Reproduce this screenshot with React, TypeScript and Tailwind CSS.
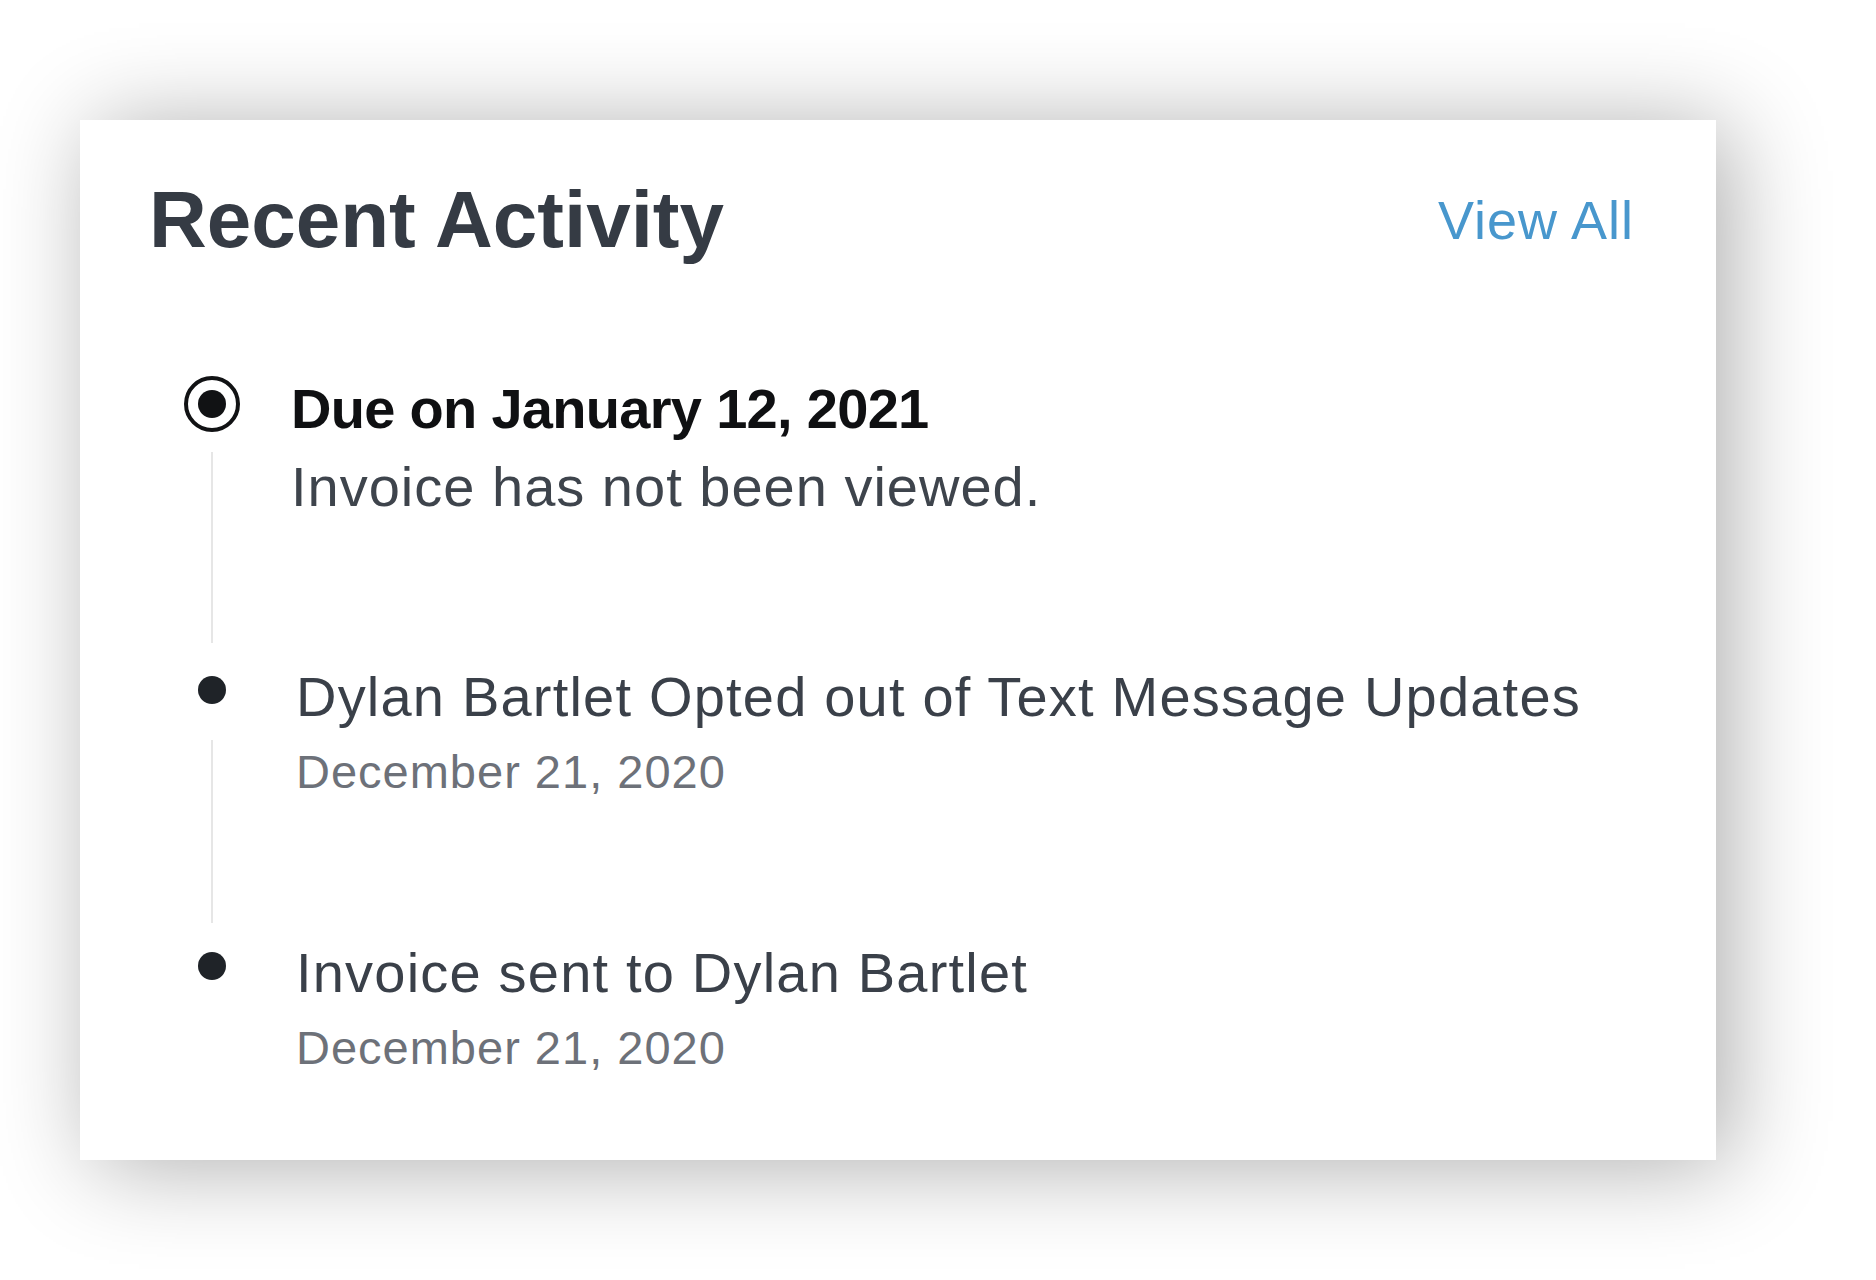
const ITEMS = [
  {
    title: "Due on January 12, 2021",
    detail: "Invoice has not been viewed.",
    current: true,
    textClass: "pl-0 pb-[138px]",
    lineClass: "mt-[20px] mb-[18px]",
  },
  {
    title: "Dylan Bartlet Opted out of Text Message Updates",
    detail: "December 21, 2020",
    current: false,
    textClass: "pl-[5px] pb-[129px]",
    lineClass: "mt-[36px] mb-[14px]",
  },
  {
    title: "Invoice sent to Dylan Bartlet",
    detail: "December 21, 2020",
    current: false,
    textClass: "pl-[5px] pb-0",
    lineClass: "",
  },
];

function Marker({ current }: { current: boolean }) {
  if (current) {
    return (
      <div className="mt-[3px] grid h-[56px] w-[56px] shrink-0 place-items-center rounded-full border-[4px] border-[#111214]">
        <div className="h-[28px] w-[28px] rounded-full bg-[#111214]" />
      </div>
    );
  }

  return <div className="mt-[15px] h-[28px] w-[28px] shrink-0 rounded-full bg-[#1f2328]" />;
}

export default function App() {
  return (
    <div
      className="h-[1280px] w-full bg-white pl-[80px] pt-[120px]"
      style={{ fontFamily: '"Liberation Sans", Arial, sans-serif' }}
    >
      <section className="h-[1040px] w-[1636px] bg-white pl-[69px] pr-[82px] pt-[56px] shadow-[14px_6px_90px_rgba(0,0,0,0.32)]">
        <header className="flex items-center justify-between">
          <h2 className="text-[80px] font-bold leading-[88px] text-[#353b44]">Recent Activity</h2>
          <a className="text-[54px] leading-[64px] tracking-[1px] text-[#4897cd]">View All</a>
        </header>

        <ol className="ml-[35px] mt-[109px]">
          {ITEMS.map((item, index) => (
            <li key={item.title} className="flex">
              <div className="flex w-[56px] shrink-0 flex-col items-center">
                <Marker current={item.current} />
                {index < ITEMS.length - 1 && (
                  <div className={`w-[2px] flex-1 bg-[#e6e6e6] ${item.lineClass}`} />
                )}
              </div>

              <div className={`ml-[51px] min-w-0 ${item.textClass}`}>
                {item.current ? (
                  <>
                    <p className="text-[56px] font-bold leading-[72px] tracking-[-0.7px] text-[#0f1012]">
                      {item.title}
                    </p>
                    <p className="mt-[6px] text-[56px] leading-[72px] tracking-[1px] text-[#3e444c]">
                      {item.detail}
                    </p>
                  </>
                ) : (
                  <>
                    <p className="text-[56px] leading-[72px] tracking-[1.2px] text-[#3a4049]">{item.title}</p>
                    <p className="mt-[3px] text-[47px] leading-[72px] tracking-[1px] text-[#6d7179]">
                      {item.detail}
                    </p>
                  </>
                )}
              </div>
            </li>
          ))}
        </ol>
      </section>
    </div>
  );
}
